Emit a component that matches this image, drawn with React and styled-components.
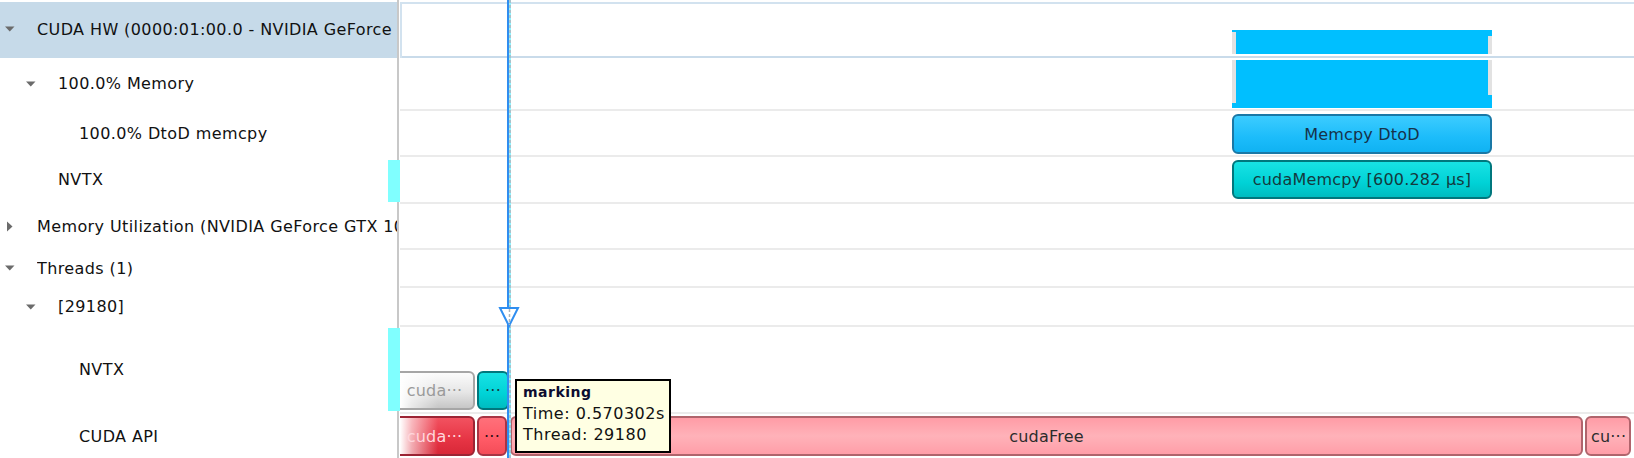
import React from 'react'
import styled, { createGlobalStyle, css } from 'styled-components'

const GlobalStyle = createGlobalStyle`
  html, body {
    margin: 0;
    padding: 0;
    background: #fff;
  }
  body {
    font-family: "DejaVu Sans", "Liberation Sans", sans-serif;
  }
`

const rows = [
  { label: 'CUDA HW (0000:01:00.0 - NVIDIA GeForce GTX 1080)', level: 0, arrow: 'down', height: 56, selected: true },
  { label: '100.0% Memory', level: 1, arrow: 'down', height: 53 },
  { label: '100.0% DtoD memcpy', level: 2, height: 46 },
  { label: 'NVTX', level: 1, height: 47, marker: { top: 3, height: 42 } },
  { label: 'Memory Utilization (NVIDIA GeForce GTX 1080)', level: 0, arrow: 'right', height: 46 },
  { label: 'Threads (1)', level: 0, arrow: 'down', height: 38 },
  { label: '[29180]', level: 1, arrow: 'down', height: 39 },
  { label: 'NVTX', level: 2, height: 87, marker: { top: 1, height: 83 } },
  { label: 'CUDA API', level: 2, height: 46 },
]

// bars per row index, x in lane pixels
const bars = {
  0: [{ kind: 'mem', left: 832, width: 260, top: 28, height: 24, edgeL: 2, edgeR: 6 }],
  1: [{ kind: 'mem', left: 832, width: 260, top: 2, height: 48, edgeL: 0, edgeR: 0, edgeLH: 43, edgeRH: 35 }],
  2: [{ tone: 'blue', left: 832, width: 260, top: 3, height: 40, text: 'Memcpy DtoD' }],
  3: [{ tone: 'teal', left: 832, width: 260, top: 3, height: 39, text: 'cudaMemcpy [600.282 µs]' }],
  7: [
    { tone: 'grey', left: -6, width: 81, top: 44, height: 39, text: 'cuda···', fade: true },
    { tone: 'teal', left: 77, width: 32, top: 44, height: 39, text: '···' },
  ],
  8: [
    { tone: 'red', left: -6, width: 81, top: 2, height: 40, text: 'cuda···', fade: true },
    { tone: 'redLight', left: 77, width: 30, top: 2, height: 40, text: '···' },
    { tone: 'pink', left: 110, width: 1073, top: 2, height: 40, text: 'cudaFree' },
    { tone: 'pink', left: 1185, width: 46, top: 2, height: 40, text: 'cu···', align: 'left' },
  ],
}

const tones = {
  blue: css`
    background: linear-gradient(#3cccff, #1cbcfa 60%, #10b2f2);
    border-color: #1a78a6;
    color: #16324a;
  `,
  teal: css`
    background: linear-gradient(#18e2e4, #00d2d6 60%, #00bcc0);
    border-color: #00777d;
    color: #143a3e;
  `,
  grey: css`
    background: linear-gradient(#fbfbfb, #e6e6e6 55%, #c6c6c6);
    border-color: #a6a6a6;
    color: #9a9a9a;
  `,
  red: css`
    background: linear-gradient(#f25260, #e63444 60%, #d82838);
    border-color: #9c2434;
    color: #ffd6dc;
  `,
  redLight: css`
    background: linear-gradient(#ff707a, #ff5a66 60%, #f44c58);
    border-color: #a83444;
    color: #2a1014;
  `,
  pink: css`
    background: linear-gradient(#ff9ca6, #ffb2b9 50%, #ff9ea8);
    border-color: #b0646c;
    color: #2c2c2c;
  `,
}

const Page = styled.div`
  position: relative;
  width: 1634px;
  height: 458px;
  overflow: hidden;
  display: flex;
  flex-direction: column;
  background: #fff;
`

const Row = styled.div`
  display: grid;
  grid-template-columns: 397px 2px 1fr;
  height: ${p => p.$h}px;
  flex: none;
`

const Label = styled.div`
  position: relative;
  display: flex;
  align-items: center;
  padding: 0 0 2px ${p => 5 + p.$level * 21}px;
  background: ${p => (p.$selected ? '#c6dae9' : 'transparent')};
  min-width: 0;
`

const ArrowSlot = styled.span`
  flex: none;
  width: 32px;
  display: flex;
  align-items: center;
`

const LabelText = styled.span`
  flex: 1;
  min-width: 0;
  overflow: hidden;
  white-space: nowrap;
  font-size: 16px;
  letter-spacing: 0.4px;
  color: #111;
`

const Marker = styled.span`
  position: absolute;
  right: -3px;
  width: 12px;
  background: #80ffff;
  z-index: 2;
`

const Divider = styled.div`
  background: #c8c8c8;
`

const Lane = styled.div`
  position: relative;
  overflow: hidden;
  margin-left: 1px;
  box-shadow: ${p =>
    p.$selected
      ? 'inset 0 2px #d2e2ef, inset 2px 0 #d2e2ef, inset 0 -2px #c9dbea'
      : 'inset 0 -2px #ebebeb'};
`

const Bar = styled.div`
  position: absolute;
  box-sizing: border-box;
  border: 2px solid;
  border-radius: 6px;
  display: flex;
  align-items: center;
  justify-content: ${p => (p.$align === 'left' ? 'flex-start' : 'center')};
  padding: 0 ${p => (p.$align === 'left' ? '4px' : '0')};
  overflow: hidden;
  white-space: nowrap;
  font-size: 16px;
  letter-spacing: 0.2px;
  ${p => tones[p.$tone]}
  ${p =>
    p.$fade &&
    css`
      &::after {
        content: '';
        position: absolute;
        inset: -2px auto -2px -2px;
        width: 44px;
        background: linear-gradient(to right, #fff 6px, rgba(255, 255, 255, 0.6) 18px, rgba(255, 255, 255, 0));
      }
    `}
`

const BarText = styled.span`
  position: relative;
  z-index: 1;
`

const MemBlock = styled.div`
  position: absolute;
  background: #00bfff;
`

const MemEdge = styled.span`
  position: absolute;
  width: 4px;
  background: #e2e2e2;
  ${p => (p.$side === 'left' ? 'left: 0;' : 'right: 0;')}
`

const CursorLine = styled.div`
  position: absolute;
  top: 0;
  bottom: 0;
  left: 507px;
  width: 2px;
  background: #2f8ef0;
  z-index: 5;
`

const CursorDash = styled.div`
  position: absolute;
  top: 0;
  bottom: 0;
  left: 509px;
  width: 2px;
  background: repeating-linear-gradient(#a9c2cc 0 3px, #8ff4ff 3px 5px);
  z-index: 5;
`

const CursorHead = styled.svg`
  position: absolute;
  left: 498px;
  top: 306px;
  z-index: 6;
`

const Tooltip = styled.div`
  position: absolute;
  left: 515px;
  top: 379px;
  width: 156px;
  height: 74px;
  box-sizing: border-box;
  border: 2px solid #000;
  background: #ffffe3;
  padding: 1px 4px 0 6px;
  z-index: 7;
  font-size: 16px;
  letter-spacing: 0.5px;
  line-height: 21px;
  color: #111;
`

const TipTitle = styled.div`
  font-weight: bold;
  font-size: 14px;
  color: #0c0c30;
`

function Arrow({ dir }) {
  if (dir === 'down') {
    return (
      <svg width="10" height="6" viewBox="0 0 10 6">
        <polygon points="0,0.5 9.5,0.5 4.75,5.5" fill="#6b6b6b" />
      </svg>
    )
  }
  if (dir === 'right') {
    return (
      <svg width="10" height="11" viewBox="0 0 10 11">
        <polygon points="2,0.5 7.5,5.5 2,10.5" fill="#6b6b6b" />
      </svg>
    )
  }
  return null
}

function LaneBars({ items }) {
  return items.map((b, i) => {
    if (b.kind === 'mem') {
      return (
        <MemBlock key={i} style={{ left: b.left, width: b.width, top: b.top, height: b.height }}>
          <MemEdge $side="left" style={{ top: b.edgeL, height: b.edgeLH ?? b.height - b.edgeL }} />
          <MemEdge $side="right" style={{ top: b.edgeR, height: b.edgeRH ?? b.height - b.edgeR }} />
        </MemBlock>
      )
    }
    return (
      <Bar
        key={i}
        $tone={b.tone}
        $fade={b.fade}
        $align={b.align}
        style={{ left: b.left, width: b.width, top: b.top, height: b.height }}
      >
        <BarText>{b.text}</BarText>
      </Bar>
    )
  })
}

function App() {
  return (
    <Page>
      <GlobalStyle />
      <Row $h={2}>
        <div />
        <Divider />
        <div />
      </Row>
      {rows.map((r, i) => (
        <Row key={i} $h={r.height}>
          <Label $level={r.level} $selected={r.selected}>
            <ArrowSlot>{r.arrow && <Arrow dir={r.arrow} />}</ArrowSlot>
            <LabelText>{r.label}</LabelText>
            {r.marker && <Marker style={{ top: r.marker.top, height: r.marker.height }} />}
          </Label>
          <Divider />
          <Lane $selected={r.selected}>
            <LaneBars items={bars[i] || []} />
          </Lane>
        </Row>
      ))}
      <CursorLine />
      <CursorDash />
      <CursorHead width="22" height="22" viewBox="0 0 22 22">
        <polygon points="2,2 20,2 11,20" fill="#fff" stroke="#2f8ef0" strokeWidth="2" strokeLinejoin="miter" />
        <line x1="11.5" y1="3" x2="11.5" y2="19" stroke="#a9b4bb" strokeWidth="1.5" strokeDasharray="3 2" />
      </CursorHead>
      <Tooltip>
        <TipTitle>marking</TipTitle>
        <div>Time: 0.570302s</div>
        <div>Thread: 29180</div>
      </Tooltip>
    </Page>
  )
}

export default App
